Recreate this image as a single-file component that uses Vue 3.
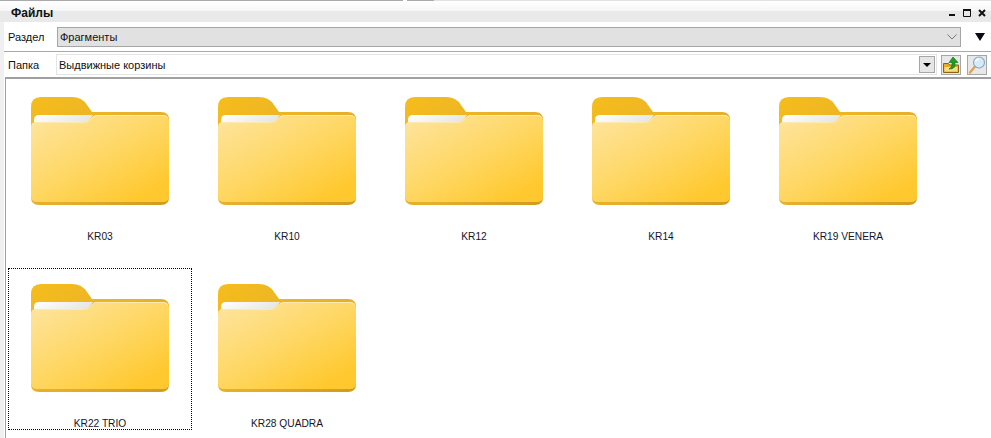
<script setup>
const folders = [
  { id: 1, name: 'KR03' },
  { id: 2, name: 'KR10' },
  { id: 3, name: 'KR12' },
  { id: 4, name: 'KR14' },
  { id: 5, name: 'KR19 VENERA' },
  { id: 6, name: 'KR22 TRIO', selected: true },
  { id: 7, name: 'KR28 QUADRA' }
]
</script>

<template>
  <div class="panel">
    <div class="topline">
      <span class="seg-a"></span>
      <span class="seg-b"></span>
      <span class="seg-c"></span>
    </div>
    <div class="titlebar">
      <span class="title">Файлы</span>
      <div class="winbtns">
        <svg width="8" height="8" viewBox="0 0 8 8"><rect x="1" y="5" width="6" height="2" fill="#111" /></svg>
        <svg width="8" height="8" viewBox="0 0 8 8"><path d="M.5 1.500h7v6h-7z" fill="none" stroke="#111" /><rect y="0" width="8" height="2" fill="#111" /></svg>
        <svg width="8" height="8" viewBox="0 0 8 8"><path d="M1 1l6 6M7 1l-6 6" stroke="#111" stroke-width="2" /></svg>
      </div>
    </div>
    <div class="body">
      <div class="row row-first">
        <label class="lbl">Раздел</label>
        <div class="select">
          <span>Фрагменты</span>
          <svg width="10" height="6" viewBox="0 0 10 6"><path d="M.5.5L5 5 9.5.5" fill="none" stroke="#777" /></svg>
        </div>
        <svg class="filter" width="10" height="8" viewBox="0 0 10 8"><path d="M0 0h10L5 8z" fill="#0a0a14" /></svg>
      </div>
      <div class="row row-second">
        <label class="lbl">Папка</label>
        <div class="input">
          <span>Выдвижные корзины</span>
          <button class="combo"><svg width="8" height="4" viewBox="0 0 8 4"><path d="M0 0h8L4 4z" fill="#000" /></svg></button>
        </div>
        <button class="tool tool-first">
          <svg width="18" height="18" viewBox="0 0 18 18">
            <path d="M1.500 7.500h5l1 1.500h9v7.500h-15z" fill="#e6ac2c" stroke="#8a6414" />
            <path d="M2.500 11h13v4.500h-13z" fill="#fcdc80" />
            <path d="M11 1l5 5.500h-3V9q0 4-6 4 3-1.500 3-4V6.500H7z" fill="#1f9e1f" stroke="#0d6a0d" stroke-width=".6" />
          </svg>
        </button>
        <button class="tool">
          <svg width="18" height="18" viewBox="0 0 18 18">
            <path d="M2 16.500l5-6" stroke="#dba456" stroke-width="2.400" stroke-linecap="round" />
            <circle cx="11" cy="6.500" r="5.500" fill="#d4ecfa" stroke="#8fa8bd" stroke-width="1.200" />
            <path d="M7.500 5.500a3.800 3.800 0 0 1 3.500-2.500" fill="none" stroke="#fff" stroke-width="1.400" />
          </svg>
        </button>
      </div>
      <div class="list">
        <div v-for="f in folders" :key="f.id" class="item" :class="{ selected: f.selected }">
          <svg class="folder" width="138" height="108" viewBox="0 0 138 108">
            <defs>
              <linearGradient :id="'back' + f.id" x1="0" y1="0" x2="1" y2="1">
                <stop offset="0" stop-color="#f6bd1c" />
                <stop offset="0.6" stop-color="#e5ae2c" />
                <stop offset="1" stop-color="#d09a22" />
              </linearGradient>
              <linearGradient :id="'paper' + f.id" x1="0" y1="0" x2="1" y2="0.3">
                <stop offset="0" stop-color="#ffffff" />
                <stop offset="1" stop-color="#e6e6e4" />
              </linearGradient>
              <linearGradient :id="'front' + f.id" x1="0.05" y1="0.1" x2="0.8" y2="0.95">
                <stop offset="0" stop-color="#fee398" />
                <stop offset="0.55" stop-color="#fed660" />
                <stop offset="1" stop-color="#ffc82e" />
              </linearGradient>
            </defs>
            <path d="M0 10Q0 0 10 0H41Q51 0 56 8L61 15H130Q138 15 138 23V100Q138 108 130 108H8Q0 108 0 100Z" :fill="'url(#back' + f.id + ')'" />
            <path d="M3 28V23Q3 18 8 18H62L56 26H3Z" :fill="'url(#paper' + f.id + ')'" />
            <path d="M0 30Q0 25 5 25H52Q55 25 57 23.500L61 20Q63 18 66 18H132Q138 18 138 24V99Q138 105 132 105H6Q0 105 0 99Z" :fill="'url(#front' + f.id + ')'" />
            <path d="M1 28Q2 25.500 5 25.500H52Q55 25.500 57.500 24L61.500 20.500Q63 18.500 66 18.500H132Q136 18.500 137 21" fill="none" stroke="#feeab0" />
          </svg>
          <span class="name">{{ f.name }}</span>
        </div>
      </div>
    </div>
  </div>
</template>

<style scoped>
.panel {
  width: 991px;
  height: 438px;
  overflow: hidden;
  background: #fff;
  font-family: "Liberation Sans", sans-serif;
  font-size: 11px;
  color: #111;
  display: flex;
  flex-direction: column;
}

.topline {
  display: flex;
  height: 1px;
  flex: none;
}

.seg-a {
  width: 403px;
  background: #aaa;
}

.seg-b {
  width: 27px;
  margin-left: 4px;
  background: #aaa;
}

.seg-c {
  flex: 1;
  background: #e2e2e2;
}

.titlebar {
  height: 21px;
  flex: none;
  display: flex;
  justify-content: space-between;
  align-items: center;
  padding: 0 5px 0 11px;
  background: linear-gradient(#fff 0, #f6f6f6 50%, #e9e9e9 50%, #e9e9e9 100%);
}

.title {
  font-weight: bold;
  font-size: 12px;
  margin-top: 3px;
}

.winbtns {
  display: flex;
  gap: 7px;
  margin-top: 3px;
}

.body {
  flex: 1;
  display: flex;
  flex-direction: column;
  border-left: 4px solid #f0f0f0;
  min-height: 0;
}

.row {
  display: flex;
  align-items: center;
  flex: none;
}

.row-first {
  height: 29px;
  border-bottom: 1px solid #a9a9a9;
}

.row-second {
  height: 25px;
}

.lbl {
  width: 52px;
  box-sizing: border-box;
  padding-left: 4px;
  flex: none;
}

.select {
  width: 904px;
  height: 20px;
  box-sizing: border-box;
  border: 1px solid #a6a6a6;
  background: #e1e1e1;
  display: flex;
  align-items: center;
  justify-content: space-between;
  padding: 0 3px 0 2px;
  margin-left: 1px;
}

.filter {
  margin-left: 14px;
}

.input {
  width: 881px;
  height: 21px;
  box-sizing: border-box;
  border: 1px solid #e4e4e4;
  display: flex;
  align-items: center;
  justify-content: space-between;
  padding: 0 1px 0 2px;
}

.combo {
  width: 16px;
  height: 17px;
  padding: 0;
  border: 1px solid #a6a6a6;
  background: #e6e6e6;
  display: flex;
  align-items: center;
  justify-content: center;
}

.tool {
  width: 20px;
  height: 20px;
  margin-left: 6px;
  padding: 0;
  border: 1px solid #a6a6a6;
  background: #e8e8e8;
  display: flex;
  align-items: center;
  justify-content: center;
}

.tool-first {
  margin-left: 4px;
}

.list {
  flex: 1;
  min-height: 0;
  border-top: 2px solid #a0a0a0;
  border-left: 1px solid #a0a0a0;
  margin-left: 1px;
  padding: 2px 0 0 2px;
  display: grid;
  grid-template-columns: repeat(5, 184px);
  grid-auto-rows: 162px;
  column-gap: 3px;
  row-gap: 25px;
}

.item {
  box-sizing: border-box;
  display: flex;
  flex-direction: column;
  align-items: center;
  padding-top: 15px;
  border: 1px dotted transparent;
}

.item.selected {
  border-color: #000;
}

.folder {
  display: block;
  flex: none;
}

.name {
  margin-top: 26px;
  font-size: 10.2px;
  color: #14142c;
}
</style>
